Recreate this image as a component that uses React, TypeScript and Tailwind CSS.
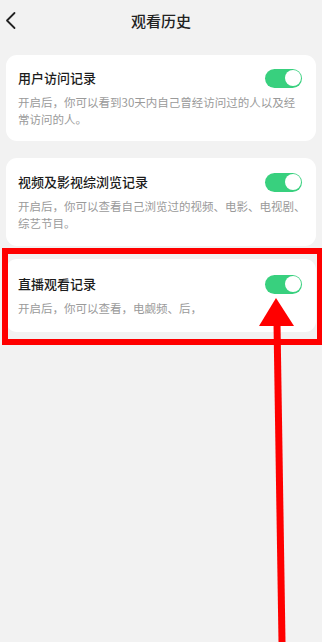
import React from "react";

function Toggle() {
  return (
    <div className="w-[37px] h-[19px] rounded-full bg-[#38d07e] p-[1.5px] flex justify-end items-center shrink-0">
      <div className="w-[16px] h-[16px] rounded-full bg-white" />
    </div>
  );
}

function Card({
  title,
  lines,
  className,
}: {
  title: string;
  lines: string[];
  className: string;
}) {
  return (
    <div className={"bg-white rounded-[11px] pl-[12px] pr-[14px] " + className}>
      <div className="flex items-center justify-between h-[18px]">
        <span className="text-[13px] leading-[18px] font-medium text-[#1c1c1c] whitespace-nowrap">
          {title}
        </span>
        <Toggle />
      </div>
      <div className="mt-[7px] text-[11.5px] leading-[17px] text-[#9a9a9a] whitespace-nowrap">
        {lines.map((l, i) => (
          <div key={i}>{l}</div>
        ))}
      </div>
    </div>
  );
}

export default function App() {
  return (
    <div
      className="relative w-[322px] h-[642px] overflow-hidden bg-[#f2f2f2]"
      style={{ fontFamily: '"Noto Sans CJK SC", "Noto Sans", sans-serif' }}
    >
      <div className="relative h-[42px] flex items-center justify-center">
        <svg
          className="absolute left-0 top-0"
          width="24"
          height="42"
          viewBox="0 0 24 42"
        >
          <path
            d="M14.5 13 L7 20.5 L14.5 28"
            fill="none"
            stroke="#222"
            strokeWidth="1.8"
            strokeLinecap="round"
            strokeLinejoin="round"
          />
        </svg>
        <span className="text-[15px] font-medium text-[#222]">观看历史</span>
      </div>

      <div className="px-[6px] pt-[13px] flex flex-col">
        <Card
          className="pt-[14px] pb-[13px]"
          title="用户访问记录"
          lines={[
            "开启后，你可以看到30天内自己曾经访问过的人以及经",
            "常访问的人。",
          ]}
        />
        <Card
          className="mt-[17px] pt-[15px] pb-[14px]"
          title="视频及影视综浏览记录"
          lines={[
            "开启后，你可以查看自己浏览过的视频、电影、电视剧、",
            "综艺节目。",
          ]}
        />
        <div className="relative mt-[13px]">
          <Card
            className="pt-[16px] pb-[15px]"
            title="直播观看记录"
            lines={["开启后，你可以查看，电觑频、后，"]}
          />
          <div className="absolute -left-[4px] -right-[7px] -top-[11px] -bottom-[13px] border-[6px] border-[#ff0000] pointer-events-none" />
        </div>
      </div>

      <svg
        className="absolute inset-0 pointer-events-none"
        width="322"
        height="642"
        viewBox="0 0 322 642"
      >
        <polygon points="276,298 259,326 294,326" fill="#ff0000" />
        <polygon points="273.5,324 280.5,324 285.5,642 278.5,642" fill="#ff0000" />
      </svg>
    </div>
  );
}
